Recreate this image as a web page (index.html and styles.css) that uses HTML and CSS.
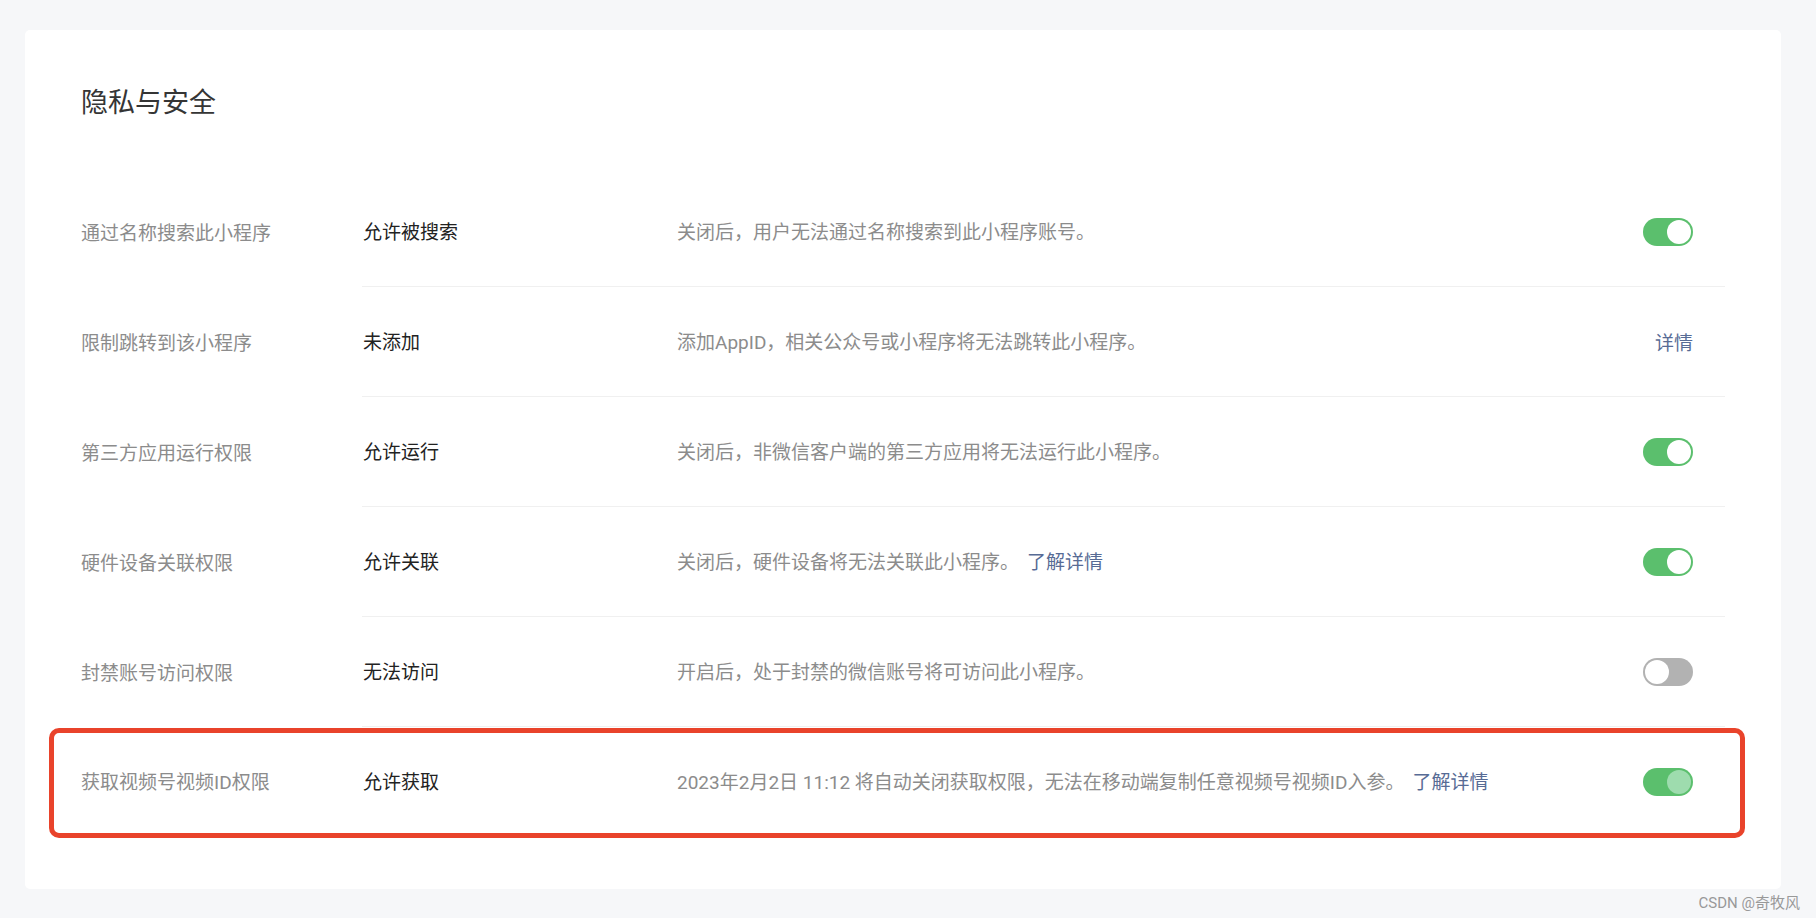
FILE: index.html
```html
<!DOCTYPE html>
<html lang="zh-CN">
<head>
    <meta charset="UTF-8">
    <title>隐私与安全</title>
    <link rel="stylesheet" href="styles.css">
</head>
<body>

<div class="card">
    <div class="title">隐私与安全</div>

    <div class="settings">
        <div class="row">
            <div class="label">通过名称搜索此小程序</div>
            <div class="main">
                <div class="value">允许被搜索</div>
                <div class="desc">关闭后，用户无法通过名称搜索到此小程序账号。</div>
                <div class="action"><span class="switch on"></span></div>
            </div>
        </div>
        <div class="row">
            <div class="label">限制跳转到该小程序</div>
            <div class="main">
                <div class="value">未添加</div>
                <div class="desc">添加AppID，相关公众号或小程序将无法跳转此小程序。</div>
                <div class="action"><a class="link">详情</a></div>
            </div>
        </div>
        <div class="row">
            <div class="label">第三方应用运行权限</div>
            <div class="main">
                <div class="value">允许运行</div>
                <div class="desc">关闭后，非微信客户端的第三方应用将无法运行此小程序。</div>
                <div class="action"><span class="switch on"></span></div>
            </div>
        </div>
        <div class="row">
            <div class="label">硬件设备关联权限</div>
            <div class="main">
                <div class="value">允许关联</div>
                <div class="desc">关闭后，硬件设备将无法关联此小程序。<a class="link more">了解详情</a></div>
                <div class="action"><span class="switch on"></span></div>
            </div>
        </div>
        <div class="row">
            <div class="label">封禁账号访问权限</div>
            <div class="main">
                <div class="value">无法访问</div>
                <div class="desc">开启后，处于封禁的微信账号将可访问此小程序。</div>
                <div class="action"><span class="switch"></span></div>
            </div>
        </div>
        <div class="row">
            <div class="label">获取视频号视频ID权限</div>
            <div class="main">
                <div class="value">允许获取</div>
                <div class="desc">2023年2月2日 11:12 将自动关闭获取权限，无法在移动端复制任意视频号视频ID入参。<a class="link more">了解详情</a></div>
                <div class="action"><span class="switch on disabled"></span></div>
            </div>
        </div>
    </div>

    <div class="highlight"></div>
</div>

<div class="watermark">CSDN @奇牧风</div>

</body>
</html>
```

FILE: styles.css
```css
body {
    margin: 0;
    background-color: #f6f7f9;
    font-family: Roboto, "Noto Sans CJK SC", sans-serif;
    color: #353535;
}
.card {
    position: relative;
    margin: 30px 35px 0 25px;
    padding: 55px 56px 53px 56px;
    background-color: #fff;
    border-radius: 5px;
}
.title {
    font-size: 27px;
    line-height: 36px;
    color: #353535;
    margin-bottom: 56px;
}
.row {
    display: flex;
}
.label {
    width: 281px;
    display: flex;
    align-items: center;
    padding-bottom: 2px;
    font-size: 19px;
    color: #8c8c8c;
}
.main {
    flex: 1;
    display: flex;
    align-items: center;
    height: 109px;
    border-bottom: 1px solid #f0f0f0;
}
.row:last-child .main {
    border-bottom: none;
}
.value {
    width: 314px;
    padding-left: 1px;
    padding-bottom: 2px;
    font-size: 19px;
    color: #222;
}
.desc {
    flex: 1;
    padding-bottom: 2px;
    font-size: 19px;
    color: #8c8c8c;
}
.action {
    padding-right: 32px;
    display: flex;
    align-items: center;
}
.link {
    color: #576b95;
    font-size: 19px;
    cursor: pointer;
}
.more {
    margin-left: 8px;
}
.switch {
    position: relative;
    display: inline-block;
    width: 50px;
    height: 28px;
    border-radius: 14px;
    background-color: #b2b2b2;
}
.switch::after {
    content: "";
    position: absolute;
    top: 2px;
    left: 2px;
    width: 24px;
    height: 24px;
    border-radius: 50%;
    background-color: #fff;
}
.switch.on {
    background-color: #5bbf6d;
}
.switch.on::after {
    left: 24px;
}
.switch.disabled::after {
    background-color: #9edcae;
}
.highlight {
    position: absolute;
    left: 24px;
    top: 698px;
    width: 1686px;
    height: 100px;
    border: 5px solid #e9432b;
    border-radius: 10px;
}
.watermark {
    text-align: right;
    padding-right: 16px;
    margin-top: 6px;
    font-size: 15px;
    line-height: 17px;
    color: #999;
}
```
